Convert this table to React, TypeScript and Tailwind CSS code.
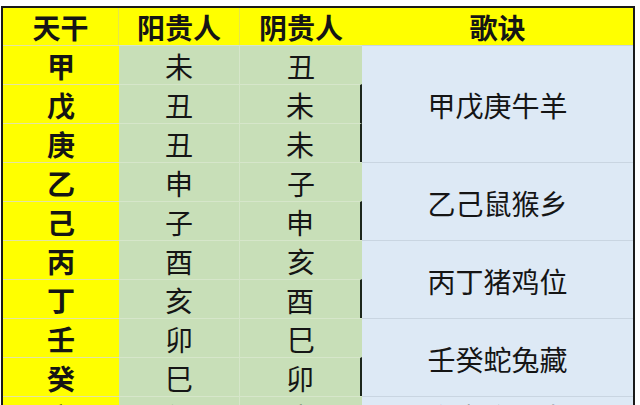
const rows = [
  { gan: "甲", yang: "未", yin: "丑" },
  { gan: "戊", yang: "丑", yin: "未" },
  { gan: "庚", yang: "丑", yin: "未" },
  { gan: "乙", yang: "申", yin: "子" },
  { gan: "己", yang: "子", yin: "申" },
  { gan: "丙", yang: "酉", yin: "亥" },
  { gan: "丁", yang: "亥", yin: "酉" },
  { gan: "壬", yang: "卯", yin: "巳" },
  { gan: "癸", yang: "巳", yin: "卯" },
  { gan: "辛", yang: "午", yin: "寅" },
];

// verse cells span several rows
const verses = [
  { text: "甲戊庚牛羊", span: "row-span-3", start: "row-start-2" },
  { text: "乙己鼠猴乡", span: "row-span-2", start: "row-start-5" },
  { text: "丙丁猪鸡位", span: "row-span-2", start: "row-start-7" },
  { text: "壬癸蛇兔藏", span: "row-span-2", start: "row-start-9" },
  { text: "六辛逢马虎", span: "row-span-1", start: "row-start-11" },
];

// rows whose 阴贵人 cell shows the dark right edge
const darkEdge = [1, 2, 4, 6, 8];

const rowStarts = [
  "row-start-2", "row-start-3", "row-start-4", "row-start-5", "row-start-6",
  "row-start-7", "row-start-8", "row-start-9", "row-start-10", "row-start-11",
];

export default function App() {
  return (
    <div
      className="w-[640px] h-[405px] overflow-hidden bg-white"
      style={{ fontFamily: '"Noto Sans CJK SC", "Noto Sans", sans-serif' }}
    >
      <div className="ml-[1px] mt-[6px] w-[634px] border-t-2 border-l-2 border-r-2 border-[#1a1a1a]">
        <div className="grid grid-cols-[116px_121px_122px_271px] grid-rows-[37px_repeat(10,39px)] text-[28px] text-[#151515]">
          {/* header */}
          <div className="row-start-1 col-start-1 flex items-center justify-center bg-[#ffff00] border-r border-[#e6e64a] font-bold">天干</div>
          <div className="row-start-1 col-start-2 flex items-center justify-center bg-[#ffff00] border-r border-[#e6e64a] font-bold">阳贵人</div>
          <div className="row-start-1 col-start-3 flex items-center justify-center bg-[#ffff00] font-bold">阴贵人</div>
          <div className="row-start-1 col-start-4 flex items-center justify-center bg-[#ffff00] font-bold">歌诀</div>

          {rows.map((r, i) => (
            <div key={r.gan} className="contents">
              <div className={`${rowStarts[i]} col-start-1 flex items-center justify-center bg-[#ffff00] border-t border-[#e4e4a0] font-bold pt-[2px]`}>
                {r.gan}
              </div>
              <div className={`${rowStarts[i]} col-start-2 flex items-center justify-center bg-[#c8dfb8] border-t border-r border-[#d6e6ca] pt-[2px]`}>
                {r.yang}
              </div>
              <div
                className={`${rowStarts[i]} col-start-3 flex items-center justify-center bg-[#c8dfb8] border-t border-[#d6e6ca] pt-[2px] ${
                  darkEdge.includes(i) ? "border-r-2 border-r-[#1c261c]" : ""
                }`}
              >
                {r.yin}
              </div>
            </div>
          ))}

          {verses.map((v) => (
            <div
              key={v.text}
              className={`${v.start} ${v.span} col-start-4 flex items-center justify-center bg-[#dde9f5] border-t border-[#c9d5e1] pt-[2px]`}
            >
              {v.text}
            </div>
          ))}
        </div>
      </div>
    </div>
  );
}
